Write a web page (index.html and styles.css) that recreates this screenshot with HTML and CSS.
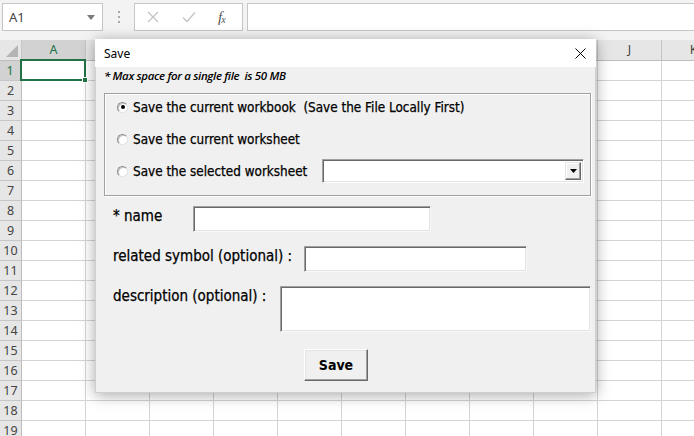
FILE: index.html
```html
<!DOCTYPE html>
<html>
<head>
<meta charset="utf-8">
<link rel="stylesheet" href="styles.css">
</head>
<body>
<div class="app">
  <div class="toolbar">
    <div class="namebox"><span class="nb-text">A1</span><svg class="nb-caret" width="8" height="5" viewBox="0 0 8 5"><path d="M0 0H8L4 5Z" fill="#7a7a7a"/></svg></div>
    <div class="dots"><i></i><i></i><i></i></div>
    <div class="fbtns">
      <svg width="12" height="12" viewBox="0 0 12 12"><path d="M1 1L11 11M11 1L1 11" stroke="#c3c3c3" stroke-width="1.3"/></svg>
      <svg width="14" height="12" viewBox="0 0 14 12"><path d="M1 6.5L5 10.5L13 1.5" stroke="#c3c3c3" stroke-width="1.3" fill="none"/></svg>
      <span class="fx">f<sub>x</sub></span>
    </div>
    <div class="finput"></div>
  </div>

  <div class="sheet">
    <div class="colheads">
      <div class="corner"><svg width="12" height="12" viewBox="0 0 12 12"><path d="M12 0V12H0Z" fill="#b4b4b4"/></svg></div>
      <div class="ch sel">A</div><div class="ch">B</div><div class="ch">C</div><div class="ch">D</div><div class="ch">E</div><div class="ch">F</div><div class="ch">G</div><div class="ch">H</div><div class="ch">I</div><div class="ch">J</div><div class="ch">K</div>
    </div>
    <div class="gridbody">
      <div class="rowheads">
        <div class="rh sel">1</div><div class="rh">2</div><div class="rh">3</div><div class="rh">4</div><div class="rh">5</div><div class="rh">6</div><div class="rh">7</div><div class="rh">8</div><div class="rh">9</div><div class="rh">10</div><div class="rh">11</div><div class="rh">12</div><div class="rh">13</div><div class="rh">14</div><div class="rh">15</div><div class="rh">16</div><div class="rh">17</div><div class="rh">18</div><div class="rh">19</div>
      </div>
      <div class="cells">
        <div class="selection"><span class="handle"></span></div>
      </div>
    </div>
  </div>

  <div class="dialog">
    <div class="titlebar">
      <span class="title">Save</span>
      <svg class="close" width="11" height="11" viewBox="0 0 11 11"><path d="M0.5 0.5L10.5 10.5M10.5 0.5L0.5 10.5" stroke="#000" stroke-width="1"/></svg>
    </div>
    <div class="dbody">
      <div class="note">* Max space for a single file&nbsp; is 50 MB</div>
      <div class="group">
        <div class="opt"><span class="radio on"></span><span class="olabel">Save the current workbook&nbsp; (Save the File Locally First)</span></div>
        <div class="opt"><span class="radio"></span><span class="olabel">Save the current worksheet</span></div>
        <div class="opt"><span class="radio"></span><span class="olabel">Save the selected worksheet</span>
          <div class="combo"><div class="combo-field"></div><div class="combo-btn"><svg width="7" height="4" viewBox="0 0 7 4"><path d="M0 0H7L3.5 4Z" fill="#000"/></svg></div></div>
        </div>
      </div>
      <div class="frow r-name"><span class="flabel">* name</span><div class="field f-name"></div></div>
      <div class="frow r-sym"><span class="flabel">related symbol (optional) :</span><div class="field f-sym"></div></div>
      <div class="frow r-desc"><span class="flabel">description (optional) :</span><div class="field f-desc"></div></div>
      <div class="actions"><button class="savebtn">Save</button></div>
    </div>
  </div>
</div>
</body>
</html>
```

FILE: styles.css
```css
* { box-sizing: border-box; }
html, body { margin: 0; padding: 0; }
body {
  width: 694px;
  height: 436px;
  overflow: hidden;
  background: #fff;
  font-family: "Noto Sans", "Open Sans", sans-serif;
}
.app {
  position: relative;
  width: 694px;
  height: 436px;
  overflow: hidden;
}

/* ---------- Excel toolbar ---------- */
.toolbar {
  height: 40px;
  background: #f3f3f3;
  display: flex;
  align-items: flex-start;
  padding: 3px 0 0 2px;
}
.namebox {
  width: 101px;
  height: 28px;
  background: #fff;
  border: 1px solid #c6c6c6;
  display: flex;
  align-items: center;
  justify-content: space-between;
  padding: 0 7px 0 6px;
}
.nb-text {
  font-size: 13px;
  color: #444;
}
.dots {
  width: 31px;
  height: 28px;
  display: flex;
  flex-direction: column;
  align-items: center;
  justify-content: center;
  gap: 3px;
}
.dots i {
  display: block;
  width: 2px;
  height: 2px;
  background: #a8a8a8;
}
.fbtns {
  width: 109px;
  height: 28px;
  background: #fff;
  border: 1px solid #c6c6c6;
  display: flex;
  align-items: center;
  padding-left: 12px;
  gap: 23px;
}
.fx {
  font-family: "Liberation Serif", serif;
  font-style: italic;
  font-size: 15px;
  color: #555;
  margin-left: -1px;
}
.fx sub { font-size: 10px; vertical-align: -1px; margin-left: -1px; }
.finput {
  flex: 1;
  height: 28px;
  margin-left: 4px;
  background: #fff;
  border: 1px solid #c6c6c6;
  border-right: none;
}

/* ---------- Sheet ---------- */
.sheet { font-size: 12.5px; color: #444; }
.colheads {
  display: flex;
  height: 21px;
  background: #e6e6e6;
}
.corner {
  width: 22px;
  flex: none;
  height: 21px;
  border-right: 1px solid #c6c6c6;
  border-bottom: 1px solid #bdbdbd;
  display: flex;
  align-items: flex-end;
  justify-content: flex-end;
  padding: 0 3px 3px 0;
}
.ch {
  width: 64px;
  flex: none;
  height: 21px;
  border-right: 1px solid #c6c6c6;
  border-bottom: 1px solid #bdbdbd;
  text-align: center;
  line-height: 20px;
}
.ch.sel {
  background: #d2d2d2;
  color: #217346;
  border-bottom: 2px solid #217346;
}
.gridbody { display: flex; }
.rowheads { width: 22px; flex: none; background: #e6e6e6; }
.rh {
  height: 20px;
  border-right: 1px solid #bdbdbd;
  border-bottom: 1px solid #c6c6c6;
  line-height: 19px;
  text-align: center;
}
.rh.sel {
  background: #d2d2d2;
  color: #217346;
  border-right: 2px solid #217346;
}
.cells {
  position: relative;
  flex: 1;
  height: 380px;
  background-image:
    linear-gradient(to right, transparent 63px, #d4d4d4 63px),
    linear-gradient(to bottom, transparent 19px, #d4d4d4 19px);
  background-size: 64px 20px;
}
.selection {
  position: absolute;
  left: -2px;
  top: -2px;
  width: 66px;
  height: 22px;
  border: 2px solid #217346;
}
.handle {
  position: absolute;
  right: -4px;
  bottom: -4px;
  width: 6px;
  height: 6px;
  background: #217346;
  border: 1px solid #fff;
}

/* ---------- Dialog ---------- */
.dialog {
  position: absolute;
  left: 95px;
  top: 39px;
  width: 501px;
  height: 354px;
  background: #f0f0f0;
  border: 1px solid #cfcfcf;
  box-shadow: 0 2px 14px rgba(0, 0, 0, 0.35);
}
.titlebar {
  height: 28px;
  margin: -1px -1px 0;
  background: #fff;
  display: flex;
  align-items: center;
  justify-content: space-between;
  padding: 0 9px 0 9px;
}
.title {
  font-family: "Noto Sans", sans-serif;
  font-size: 12px;
  color: #000;
}
.close { margin-right: 1px; }
.dbody {
  font-family: "DejaVu Sans Condensed", "DejaVu Sans", sans-serif;
  color: #000;
  padding: 0 0 0 8px;
}
.note {
  font-family: "Open Sans", sans-serif;
  font-style: italic;
  font-weight: 600;
  font-size: 11.5px;
  letter-spacing: -0.35px;
  line-height: 16px;
  height: 16px;
  margin-top: 1px;
  color: #000;
  white-space: pre;
}
.group {
  margin-top: 9px;
  width: 487px;
  height: 103px;
  border: 1px solid #a0a0a0;
  box-shadow: inset 1px 1px 0 #fff, 1px 1px 0 #fff;
  padding: 2px 6px 0 12px;
  display: flex;
  flex-direction: column;
  gap: 10px;
}
.opt {
  height: 22px;
  display: flex;
  align-items: center;
}
.radio {
  width: 11px;
  height: 11px;
  border-radius: 50%;
  background: #fff;
  border: 1px solid;
  border-color: #8a8a8a #e3e3e3 #e3e3e3 #8a8a8a;
  box-shadow: inset 1px 1px 0 #c8c8c8;
  margin-right: 5px;
  position: relative;
  flex: none;
}
.radio.on::after {
  content: "";
  position: absolute;
  left: 2.5px;
  top: 2.5px;
  width: 4px;
  height: 4px;
  border-radius: 50%;
  background: #000;
}
.olabel {
  font-size: 13.4px;
  white-space: pre;
  -webkit-text-stroke: 0.25px #000;
}
.combo {
  margin-left: auto;
  width: 262px;
  height: 24px;
  margin-top: -1px;
  display: flex;
  background: #fff;
  border: 1px solid;
  border-color: #a0a0a0 #fff #fff #a0a0a0;
  box-shadow: inset 1px 1px 0 #696969, inset -1px -1px 0 #e3e3e3;
  padding: 2px 2px 2px 2px;
}
.combo-field { flex: 1; }
.combo-btn {
  width: 16px;
  height: 18px;
  background: #f0f0f0;
  border: 1px solid;
  border-color: #e3e3e3 #696969 #696969 #e3e3e3;
  box-shadow: inset -1px -1px 0 #a0a0a0, inset 1px 1px 0 #fff;
  display: flex;
  align-items: center;
  justify-content: center;
}
.frow {
  display: flex;
  align-items: flex-start;
  padding-left: 9px;
}
.flabel {
  font-size: 15px;
  line-height: 20px;
  white-space: pre;
  flex: none;
  -webkit-text-stroke: 0.25px #000;
}
.field {
  background: #fff;
  border: 1px solid;
  border-color: #a0a0a0 #f8f8f8 #f8f8f8 #a0a0a0;
  box-shadow: inset 1px 1px 0 #696969, inset -1px -1px 0 #e3e3e3;
  height: 26px;
}
.r-name { margin-top: 10px; }
.r-name .flabel { width: 80px; }
.f-name { width: 238px; }
.r-sym { margin-top: 14px; }
.r-sym .flabel { width: 191px; }
.f-sym { width: 223px; }
.r-desc { margin-top: 14px; }
.r-desc .flabel { width: 167px; }
.f-desc { width: 311px; height: 46px; }
.actions {
  margin-top: 17px;
  padding-left: 200px;
}
.savebtn {
  width: 64px;
  height: 32px;
  background: #f0f0f0;
  border: 1px solid;
  border-color: #fff #696969 #696969 #fff;
  box-shadow: inset -1px -1px 0 #a0a0a0, inset 1px 1px 0 #e3e3e3;
  font-family: "DejaVu Sans Condensed", "DejaVu Sans", sans-serif;
  font-weight: bold;
  font-size: 14px;
  color: #000;
  padding: 0;
}
```
